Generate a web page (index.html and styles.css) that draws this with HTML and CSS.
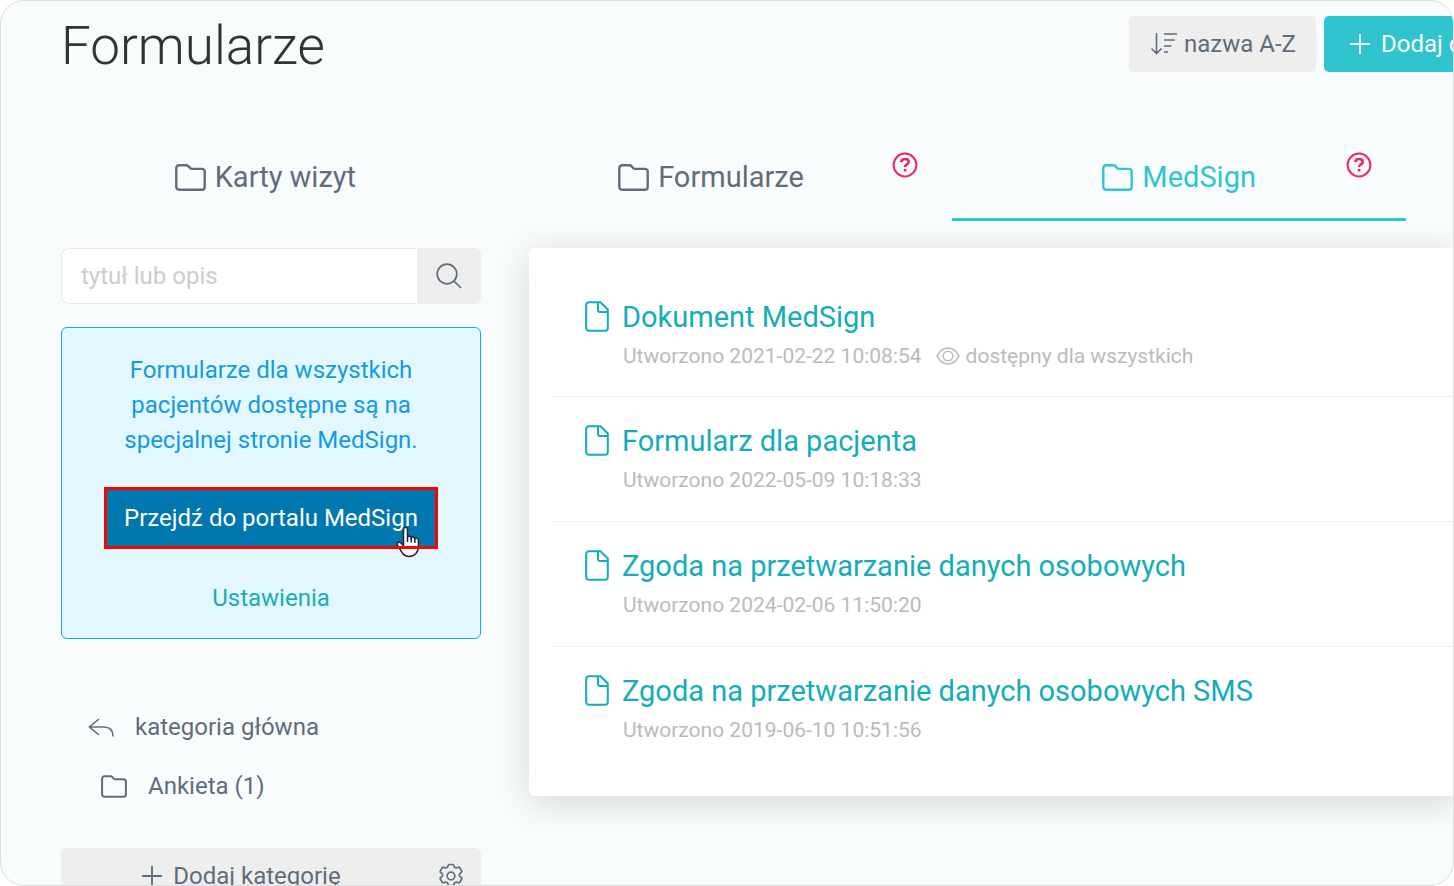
FILE: index.html
```html
<!DOCTYPE html>
<html lang="pl">
<head>
<meta charset="utf-8">
<title>Formularze</title>
<link rel="stylesheet" href="styles.css">
</head>
<body>
<svg class="sprite" aria-hidden="true">
  <symbol id="folder" viewBox="0 0 31 27"><path d="M1.3 4a2.7 2.7 0 0 1 2.700-2.700h7.300c.9 0 1.500.3 2.100.9l1.800 1.900c.5.500 1.100.8 1.900.8H27a2.700 2.700 0 0 1 2.700 2.700V23a2.700 2.700 0 0 1-2.700 2.700H4A2.700 2.700 0 0 1 1.300 23z"/></symbol>
  <symbol id="file" viewBox="0 0 24 31"><path d="M4 1.200h11.500l7.300 7.300V27a2.800 2.800 0 0 1-2.800 2.800H4A2.800 2.800 0 0 1 1.200 27V4A2.800 2.800 0 0 1 4 1.200zM13 1.500v7.500a2 2 0 0 0 2 2h7.500"/></symbol>
  <symbol id="help" viewBox="0 0 26 26"><circle cx="13" cy="13" r="11.400"/><path class="mark" d="M9.300 10.200C9.500 7.800 11 7 13 7s3.700 1 3.700 2.900c0 2.600-3.600 2.400-3.600 5M13.100 17.100v2.400"/></symbol>
  <symbol id="plus" viewBox="0 0 22 22"><path d="M11 1v20M1 11h20"/></symbol>
</svg>
<div class="frame">
  <header class="header">
    <h1 class="title">Formularze</h1>
    <div class="actions">
      <button class="btn btn-grey" type="button">
        <svg class="icon icon-sort" viewBox="0 0 28 24"><path d="M6.500 1v20M1.500 16.500l5 5 5-5M14 2h13M14 8h10.500M14 14h7.500M14 20h4"/></svg>
        <span>nazwa A-Z</span>
      </button>
      <button class="btn btn-teal" type="button">
        <svg class="icon icon-plus"><use href="#plus"/></svg>
        <span>Dodaj dokument</span>
      </button>
    </div>
  </header>

  <nav class="tabs">
    <a class="tab" href="#"><svg class="icon icon-folder"><use href="#folder"/></svg>Karty wizyt</a>
    <a class="tab" href="#"><svg class="icon icon-folder"><use href="#folder"/></svg>Formularze<svg class="icon icon-help"><use href="#help"/></svg></a>
    <a class="tab tab-active" href="#"><svg class="icon icon-folder"><use href="#folder"/></svg>MedSign<svg class="icon icon-help"><use href="#help"/></svg></a>
  </nav>

  <div class="columns">
    <aside class="side">
      <form class="search">
        <input class="search-input" type="text" placeholder="tytuł lub opis" aria-label="tytuł lub opis">
        <button class="search-btn" type="button" aria-label="Szukaj">
          <svg class="icon icon-search" viewBox="0 0 26 26"><circle cx="11" cy="11" r="9.800"/><path d="M18 18l7 7"/></svg>
        </button>
      </form>

      <section class="notice">
        <p class="notice-text">Formularze dla wszystkich pacjentów dostępne są na specjalnej stronie MedSign.</p>
        <a class="portal" href="#">Przejdź do portalu MedSign
          <svg class="cursor" viewBox="0 0 24 32"><path d="M7.500 3.500c0-3 4-3 4 0V11c.5-1.300 3.300-1.200 3.600.7.800-1.300 3.400-1 3.600 1 1-1.300 3.700-.8 3.700 1.700v6.200c0 5.500-3.400 9.800-9.400 9.800-4.500 0-6.500-2.500-8-5.500L1.300 19c-1-2 1.500-3.800 3.300-2.200l2.900 2.900z"/><path d="M11.500 11v5M15.200 12v4.500M18.800 13v4"/></svg>
        </a>
        <a class="settings" href="#">Ustawienia</a>
      </section>

      <nav class="categories">
        <a class="category" href="#"><svg class="icon icon-back" viewBox="0 0 26 20"><path d="M11 1L1.500 9l9.500 8M1.500 9H16c6 0 9 3.500 9 9.500"/></svg>kategoria główna</a>
        <a class="category category-child" href="#"><svg class="icon icon-folder-small"><use href="#folder"/></svg>Ankieta (1)</a>
      </nav>

      <div class="category-tools">
        <button class="add-category" type="button"><svg class="icon icon-plus"><use href="#plus"/></svg><span>Dodaj kategorię</span></button>
        <button class="gear" type="button" aria-label="Ustawienia kategorii">
          <svg class="icon icon-gear" viewBox="0 0 26 26"><circle cx="13" cy="13" r="3.800"/><path d="M11.200 1.500h3.600c.7 0 1 .5 1.100 1.200.2 1.700 1.700 2.600 3.300 2l1-.4c.6-.3 1.200-.1 1.600.5l1.800 3.100c.4.600.2 1.200-.3 1.600l-.9.700c-1.400 1.100-1.400 2.500 0 3.600l.9.700c.5.400.7 1 .3 1.600l-1.800 3.100c-.4.600-1 .8-1.600.5l-1-.4c-1.600-.6-3.100.3-3.300 2-.1.700-.4 1.200-1.100 1.200h-3.600c-.7 0-1-.5-1.100-1.200-.2-1.700-1.700-2.600-3.300-2l-1 .4c-.6.3-1.200.1-1.600-.5l-1.800-3.100c-.4-.6-.2-1.200.3-1.600l.9-.7c1.400-1.100 1.400-2.500 0-3.600l-.9-.7c-.5-.4-.7-1-.3-1.600l1.800-3.100c.4-.6 1-.8 1.600-.5l1 .4c1.600.6 3.100-.3 3.300-2 .1-.7.4-1.200 1.100-1.200z"/></svg>
        </button>
      </div>
    </aside>

    <main class="card">
      <article class="item">
        <svg class="icon icon-file"><use href="#file"/></svg>
        <div class="item-body">
          <a class="item-title" href="#">Dokument MedSign</a>
          <p class="meta"><span>Utworzono 2021-02-22 10:08:54</span><span class="access"><svg class="icon icon-eye" viewBox="0 0 24 18"><path d="M1 9c2.500-5 6.500-8 11-8s8.500 3 11 8c-2.500 5-6.500 8-11 8S3.500 14 1 9z"/><circle cx="12" cy="9" r="4.800"/></svg>dostępny dla wszystkich</span></p>
        </div>
      </article>
      <article class="item">
        <svg class="icon icon-file"><use href="#file"/></svg>
        <div class="item-body">
          <a class="item-title" href="#">Formularz dla pacjenta</a>
          <p class="meta">Utworzono 2022-05-09 10:18:33</p>
        </div>
      </article>
      <article class="item">
        <svg class="icon icon-file"><use href="#file"/></svg>
        <div class="item-body">
          <a class="item-title" href="#">Zgoda na przetwarzanie danych osobowych</a>
          <p class="meta">Utworzono 2024-02-06 11:50:20</p>
        </div>
      </article>
      <article class="item">
        <svg class="icon icon-file"><use href="#file"/></svg>
        <div class="item-body">
          <a class="item-title" href="#">Zgoda na przetwarzanie danych osobowych SMS</a>
          <p class="meta">Utworzono 2019-06-10 10:51:56</p>
        </div>
      </article>
    </main>
  </div>
</div>
</body>
</html>
```
FILE: styles.css
```css
* { box-sizing: border-box; }

body {
  margin: 0;
  background: #fff;
  color: #5f6c7b;
  font: 24px/35px Roboto, "Liberation Sans", sans-serif;
}

a { color: inherit; text-decoration: none; }
p, h1 { margin: 0; }
button, input { font: inherit; color: inherit; border: 0; margin: 0; }

.sprite { display: none; }

.frame {
  height: 100vh;
  padding: 15px 0 0 60px;
  overflow: hidden;
  border: 1px solid #dcdfe0;
  border-radius: 24px;
  background: #f9fcfd;
}

.icon {
  flex: none;
  fill: none;
  stroke: currentColor;
  stroke-width: 2;
}

.header { display: flex; justify-content: space-between; }

.title {
  color: #333;
  font-size: 53px;
  font-weight: 300;
  line-height: 60px;
}

.actions { display: flex; flex: 0 0 324px; gap: 8px; min-width: 0; }

.btn {
  display: flex;
  flex: none;
  align-items: center;
  height: 56px;
  border-radius: 5px;
  white-space: nowrap;
}
.btn-grey { gap: 6px; padding: 0 20px 0 21px; background: #eee; }
.btn-teal { gap: 10px; padding: 0 24px 0 25px; background: #2fc5ce; color: #fff; }

.icon-sort { width: 28px; height: 24px; stroke-width: 1.6; }
.icon-plus { width: 22px; height: 22px; stroke-width: 1.8; }

.tabs {
  display: grid;
  grid-template-columns: 409fr 483fr 454fr;
  margin: 57px 47px 27px 0;
}
.tab {
  position: relative;
  display: flex;
  align-items: center;
  justify-content: center;
  gap: 9px;
  height: 88px;
  padding-top: 3px;
  border-bottom: 3px solid transparent;
  font-size: 29px;
}
.tab-active { border-color: #2fc5ce; color: #2fc5ce; }
.icon-folder { width: 31px; height: 27px; stroke-width: 2.4; }
.icon-help {
  position: absolute;
  top: 19px;
  right: 34px;
  width: 26px;
  height: 26px;
  color: #f0246b;
}
.mark { stroke-width: 2.6; }

.columns { display: flex; gap: 48px; align-items: flex-start; }
.side { flex: 0 0 420px; }

.search { display: flex; height: 56px; }
.search-input {
  flex: 1;
  min-width: 0;
  padding: 0 19px;
  border: 1px solid #e6e9ef;
  border-right: 0;
  border-radius: 8px 0 0 8px;
  background: #fff;
}
.search-input::placeholder { color: #ccc; opacity: 1; }
.search-btn, .gear {
  display: flex;
  align-items: center;
  justify-content: center;
  padding: 0;
}
.search-btn {
  flex: 0 0 64px;
  border-radius: 0 6px 6px 0;
  background: #eee;
}
.icon-search { width: 26px; height: 26px; stroke-width: 1.7; }

.notice {
  display: flex;
  flex-direction: column;
  align-items: center;
  margin-top: 23px;
  padding: 25px 40px 22px;
  border: 1px solid #1ca3e0;
  border-radius: 6px;
  background: #e3f7ff;
  color: #149bdf;
  text-align: center;
}
.portal {
  position: relative;
  margin: 29px 0 32px;
  padding: 14px 20px 13px;
  background: #0077ae;
  color: #fff;
  white-space: nowrap;
}
.portal::after {
  content: "";
  position: absolute;
  inset: 0;
  border: 3px solid #f00;
}
.cursor {
  position: absolute;
  right: 18px;
  bottom: -9px;
  width: 24px;
  height: 32px;
  fill: #fff;
  stroke: #1c2430;
  stroke-width: 1.5;
}
.settings { color: #17aeb8; }

.categories { display: grid; gap: 24px; margin: 71px 27px 44px; }
.category { display: flex; align-items: center; gap: 21px; }
.category-child { padding-left: 13px; }
.icon-back { width: 26px; height: 20px; stroke-width: 1.6; }
.icon-folder-small { width: 26px; height: 23px; stroke-width: 2.4; }

.category-tools { display: flex; height: 56px; border-radius: 6px; background: #eee; }
.add-category {
  display: flex;
  flex: 1;
  align-items: center;
  justify-content: center;
  gap: 10px;
  padding: 0;
  background: none;
}
.gear { flex: 0 0 60px; background: none; }
.icon-gear { width: 26px; height: 26px; stroke-width: 1.7; }

.card {
  flex: 1;
  min-width: 0;
  margin-right: -8px;
  padding: 24px 0 25px 25px;
  border-radius: 6px;
  background: #fff;
  box-shadow: 0 6px 36px rgba(0, 0, 0, 0.15);
}
.item { display: flex; gap: 13px; height: 125px; padding: 28px 31px 0; }
.item:first-child { height: 124px; padding-top: 29px; }
.item + .item { border-top: 1px solid #eee; }
.icon-file { width: 24px; height: 31px; color: #12adb7; }
.item-title { display: block; color: #12adb7; font-size: 29px; line-height: 32px; }
.meta {
  display: flex;
  gap: 14px;
  margin-top: 8px;
  padding-left: 1px;
  color: #b9bbbd;
  font-size: 21px;
  line-height: 30px;
}
.access { display: flex; align-items: center; gap: 6px; }
.icon-eye { width: 24px; height: 18px; stroke-width: 1.5; }
```
